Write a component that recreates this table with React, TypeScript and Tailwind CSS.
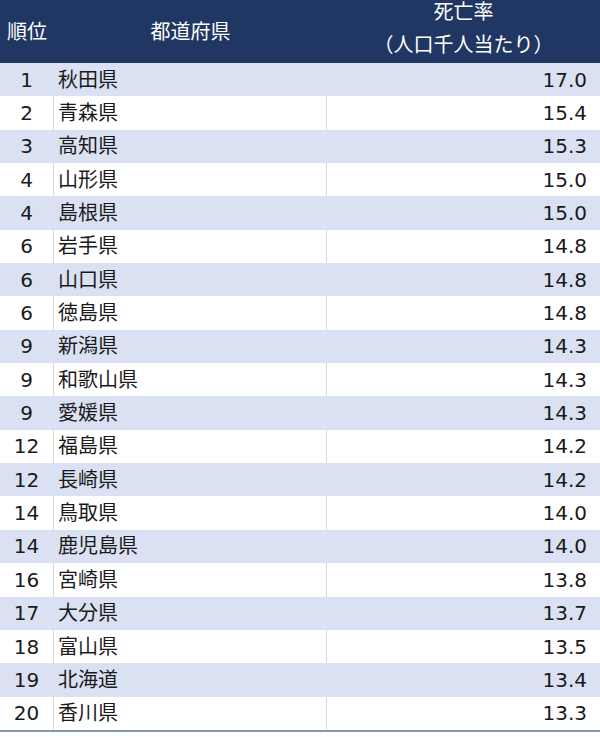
const rows: [string, string, string][] = [
  ["1", "秋田県", "17.0"],
  ["2", "青森県", "15.4"],
  ["3", "高知県", "15.3"],
  ["4", "山形県", "15.0"],
  ["4", "島根県", "15.0"],
  ["6", "岩手県", "14.8"],
  ["6", "山口県", "14.8"],
  ["6", "徳島県", "14.8"],
  ["9", "新潟県", "14.3"],
  ["9", "和歌山県", "14.3"],
  ["9", "愛媛県", "14.3"],
  ["12", "福島県", "14.2"],
  ["12", "長崎県", "14.2"],
  ["14", "鳥取県", "14.0"],
  ["14", "鹿児島県", "14.0"],
  ["16", "宮崎県", "13.8"],
  ["17", "大分県", "13.7"],
  ["18", "富山県", "13.5"],
  ["19", "北海道", "13.4"],
  ["20", "香川県", "13.3"],
];

export default function App() {
  return (
    <div
      className="w-[600px] h-[737px] bg-white text-[20px] text-[#1a1a1a]"
      style={{ fontFamily: '"DejaVu Sans", "Noto Sans CJK JP", sans-serif' }}
    >
      <div className="flex h-[63px] bg-[#203764] text-white leading-none">
        <div className="w-[54px] flex items-center pl-[7px]">順位</div>
        <div className="w-[273px] flex items-center justify-center">都道府県</div>
        <div className="flex-1 flex flex-col items-center pt-[1px]">
          <div className="h-[22px] flex items-center">死亡率</div>
          <div className="h-[22px] mt-[11px] flex items-center">（人口千人当たり）</div>
        </div>
      </div>
      <div className="border-b-2 border-[#8497b0]">
        {rows.map(([rank, name, value], i) => {
          const blue = i % 2 === 0;
          return (
            <div
              key={i}
              className={`flex h-[33.35px] items-center leading-none ${blue ? "bg-[#d9e1f2]" : "bg-white"}`}
            >
              <div
                className={`w-[54px] h-full flex items-center justify-center border-r ${blue ? "border-transparent" : "border-[#d9d9d9]"}`}
              >
                {rank}
              </div>
              <div
                className={`w-[273px] h-full flex items-center pl-[4px] border-r ${blue ? "border-transparent" : "border-[#d9d9d9]"}`}
              >
                {name}
              </div>
              <div className="flex-1 h-full flex items-center justify-end pr-[13px]">{value}</div>
            </div>
          );
        })}
      </div>
    </div>
  );
}
